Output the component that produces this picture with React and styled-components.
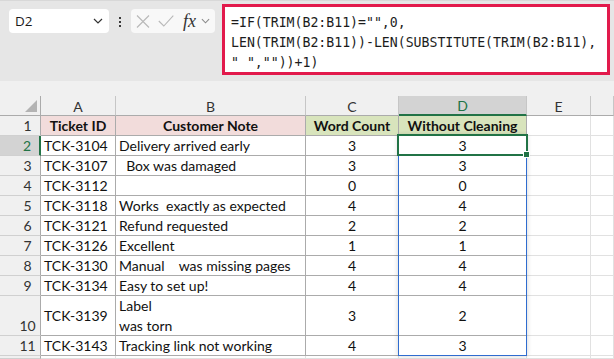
import React from "react";
import styled, { createGlobalStyle, css } from "styled-components";

const GlobalStyle = createGlobalStyle`
  html, body { margin: 0; padding: 0; background: #ffffff; overflow: hidden; }
  #root { width: 614px; height: 359px; overflow: hidden; }
`;

const Page = styled.div`
  width: 614px;
  height: 359px;
  display: flex;
  flex-direction: column;
  overflow: hidden;
`;

const Toolbar = styled.div`
  height: 81px;
  flex: none;
  box-sizing: border-box;
  background: #e6e6e6;
  border-top: 1px solid #d8d8d8;
  display: flex;
  align-items: flex-start;
  padding: 3px 0 0 9px;
`;

const NameBox = styled.div`
  margin-top: 5px;
  width: 100px;
  height: 24px;
  box-sizing: border-box;
  background: #ffffff;
  border-radius: 4px;
  display: flex;
  align-items: center;
  justify-content: space-between;
  padding: 0 6px 0 6px;
  font-family: "Open Sans", "Noto Sans", sans-serif;
  font-size: 13.5px;
  color: #1a1a1a;
`;

const Dots = styled.div`
  margin: 13px 10px 0 10px;
  width: 2px;
  display: flex;
  flex-direction: column;
  gap: 2px;
`;

const Dot = styled.span`
  width: 2px;
  height: 2px;
  background: #3a3a3a;
`;

const FxBox = styled.div`
  margin-top: 5px;
  width: 84px;
  height: 24px;
  box-sizing: border-box;
  background: #f8f8f8;
  border-radius: 4px;
  display: flex;
  align-items: center;
  padding: 0 3px 0 5px;
  gap: 8px;
`;

const FxLabel = styled.span`
  font-family: "Liberation Serif", "DejaVu Serif", serif;
  font-style: italic;
  font-size: 18px;
  color: #333;
  line-height: 1;
  margin-left: 1px;
  margin-right: -3px;
`;

const FormulaBox = styled.div`
  margin-left: 7px;
  width: 388px;
  height: 71px;
  box-sizing: border-box;
  background: #ffffff;
  border: 3px solid #e21a4c;
  padding: 6px 0 0 6px;
  font-family: "DejaVu Sans Mono", "Liberation Mono", monospace;
  font-size: 13.2px;
  line-height: 20px;
  color: #1c1c1c;
  white-space: pre;
`;

const Band = styled.div`
  height: 15px;
  flex: none;
  background: #f0f0f0;
`;

const Sheet = styled.div`
  flex: 1;
  display: grid;
  grid-template-columns: 41px 75px 190px 93px 128px 64px 1fr;
  grid-template-rows: 20px repeat(9, 20px) 40px 20px 1fr;
  font-family: Lato, "Noto Sans", sans-serif;
  font-size: 14px;
  color: #111;
  background: #ffffff;
`;

const placed = css`
  grid-row: ${(p) => p.$r};
  grid-column: ${(p) => p.$c};
`;

const Corner = styled.div`
  grid-row: 1;
  grid-column: 1;
  background: #f0f0f0;
  border-right: 1px solid #ababab;
  border-bottom: 1px solid #ababab;
  box-sizing: border-box;
  display: flex;
  align-items: flex-end;
  justify-content: flex-end;
  padding: 0 3px 3px 0;
`;

const ColHead = styled.div`
  ${placed}
  box-sizing: border-box;
  background: ${(p) => (p.$active ? "#d3d3d3" : "#f0f0f0")};
  color: ${(p) => (p.$active ? "#217346" : "#333")};
  border-right: 1px solid #c6c6c6;
  border-bottom: ${(p) => (p.$active ? "2px solid #217346" : "1px solid #ababab")};
  display: flex;
  align-items: center;
  justify-content: center;
  padding-top: 1px;
`;

const RowHead = styled.div`
  ${placed}
  box-sizing: border-box;
  background: ${(p) => (p.$active ? "#d3d3d3" : "#f0f0f0")};
  color: ${(p) => (p.$active ? "#217346" : "#333")};
  border-right: ${(p) => (p.$active ? "2px solid #217346" : "1px solid #ababab")};
  border-bottom: 1px solid #d0d0d0;
  display: flex;
  align-items: ${(p) => (p.$tall ? "flex-end" : "center")};
  justify-content: center;
  padding-left: 15px;
  padding-bottom: ${(p) => (p.$tall ? "1px" : "0")};
`;

const Cell = styled.div`
  ${placed}
  box-sizing: border-box;
  border-right: 1px solid ${(p) => (p.$plain ? "#e1e1e1" : "#ababab")};
  border-bottom: 1px solid ${(p) => (p.$plain ? "#e1e1e1" : "#ababab")};
  background: ${(p) => p.$bg || "#ffffff"};
  display: flex;
  align-items: center;
  justify-content: ${(p) => (p.$center ? "center" : "flex-start")};
  padding: 0 3px;
  white-space: pre;
  line-height: 20px;
  overflow: hidden;
  ${(p) =>
    p.$bold &&
    css`
      font-weight: 700;
    `}
`;

const SpillRange = styled.div`
  grid-column: 5;
  grid-row: 3 / 13;
  margin: -1px 0 0 -1px;
  border: 1px solid #2f6ccf;
  box-shadow: 0 0 5px rgba(0, 0, 0, 0.18);
  pointer-events: none;
`;

const Selection = styled.div`
  grid-column: 5;
  grid-row: 3;
  margin: -2px -1px 0 -2px;
  border: 2px solid #217346;
  position: relative;
  pointer-events: none;
`;

const Handle = styled.span`
  position: absolute;
  right: -4px;
  bottom: -4px;
  width: 7px;
  height: 7px;
  box-sizing: border-box;
  background: #217346;
  border: 1px solid #ffffff;
`;

const Chevron = ({ color = "#333", w = 10 }) => (
  <svg width={w} height="6" viewBox="0 0 10 6">
    <path d="M1 1 L5 5 L9 1" fill="none" stroke={color} strokeWidth="1.2" />
  </svg>
);

const CancelIcon = () => (
  <svg width="14" height="13" viewBox="0 0 14 13">
    <path d="M1 0.5 L13 12.5 M13 0.5 L1 12.5" stroke="#b8b8b8" strokeWidth="1.1" fill="none" />
  </svg>
);

const EnterIcon = () => (
  <svg width="16" height="12" viewBox="0 0 16 12">
    <path d="M0.8 6 L5.8 11 L15.3 0.7" stroke="#b8b8b8" strokeWidth="1.1" fill="none" />
  </svg>
);

const CornerTriangle = () => (
  <svg width="12" height="12" viewBox="0 0 12 12">
    <path d="M12 0 L12 12 L0 12 Z" fill="#b3b3b3" />
  </svg>
);

const rows = [
  ["TCK-3104", "Delivery arrived early", 3, 3],
  ["TCK-3107", "  Box was damaged", 3, 3],
  ["TCK-3112", "", 0, 0],
  ["TCK-3118", "Works  exactly as expected", 4, 4],
  ["TCK-3121", "Refund requested", 2, 2],
  ["TCK-3126", "Excellent", 1, 1],
  ["TCK-3130", "Manual    was missing pages", 4, 4],
  ["TCK-3134", "Easy to set up!", 4, 4],
  ["TCK-3139", "Label\nwas torn", 3, 2],
  ["TCK-3143", "Tracking link not working", 4, 3],
];

const formula = `=IF(TRIM(B2:B11)="",0,
LEN(TRIM(B2:B11))-LEN(SUBSTITUTE(TRIM(B2:B11),
" ",""))+1)`;

const letters = ["A", "B", "C", "D", "E", "F"];

export default function App() {
  return (
    <Page>
      <GlobalStyle />
      <Toolbar>
        <NameBox>
          <span>D2</span>
          <Chevron />
        </NameBox>
        <Dots>
          <Dot />
          <Dot />
          <Dot />
        </Dots>
        <FxBox>
          <CancelIcon />
          <EnterIcon />
          <FxLabel>fx</FxLabel>
          <Chevron color="#8a8a8a" w={9} />
        </FxBox>
        <FormulaBox>{formula}</FormulaBox>
      </Toolbar>
      <Band />
      <Sheet>
        <Corner>
          <CornerTriangle />
        </Corner>
        {letters.map((c, i) => (
          <ColHead key={c} $r={1} $c={i + 2} $active={c === "D"}>
            {c === "F" ? "" : c}
          </ColHead>
        ))}

        <RowHead $r={2} $c={1}>1</RowHead>
        <Cell $r={2} $c={2} $bg="#f2dcdb" $bold $center>Ticket ID</Cell>
        <Cell $r={2} $c={3} $bg="#f2dcdb" $bold $center>Customer Note</Cell>
        <Cell $r={2} $c={4} $bg="#d8e4bc" $bold $center>Word Count</Cell>
        <Cell $r={2} $c={5} $bg="#d8e4bc" $bold $center>Without Cleaning</Cell>
        <Cell $r={2} $c={6} $plain />
        <Cell $r={2} $c={7} $plain />

        {rows.map((r, i) => {
          const n = i + 2;
          const gr = n + 1;
          return (
            <React.Fragment key={n}>
              <RowHead $r={gr} $c={1} $active={n === 2} $tall={n === 10}>{n}</RowHead>
              <Cell $r={gr} $c={2}>{r[0]}</Cell>
              <Cell $r={gr} $c={3}>{r[1]}</Cell>
              <Cell $r={gr} $c={4} $center>{r[2]}</Cell>
              <Cell $r={gr} $c={5} $center>{r[3]}</Cell>
              <Cell $r={gr} $c={6} $plain />
              <Cell $r={gr} $c={7} $plain />
            </React.Fragment>
          );
        })}

        <RowHead $r={13} $c={1} />
        {[2, 3, 4, 5, 6, 7].map((c) => (
          <Cell key={c} $r={13} $c={c} $plain />
        ))}

        <SpillRange />
        <Selection>
          <Handle />
        </Selection>
      </Sheet>
    </Page>
  );
}
